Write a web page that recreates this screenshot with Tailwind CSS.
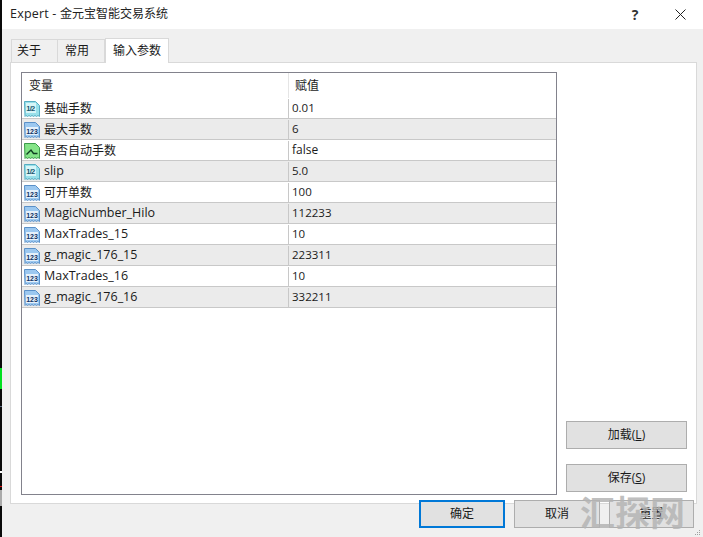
<!DOCTYPE html>
<html lang="zh-CN">
<head>
  <meta charset="UTF-8" />
  <title>Expert</title>
  <script src="https://cdn.jsdelivr.net/npm/@tailwindcss/browser@4"></script>
</head>
<body class="w-[703px] h-[537px] overflow-hidden bg-[#f0f0f0] text-[12px] text-[#1a1a1a] font-['Open_Sans','Noto_Sans_CJK_SC',sans-serif]">
  <svg width="0" height="0" class="absolute">
    <defs>
      <symbol id="ic-num" viewBox="0 0 16 16">
        <path d="M0.500 0.500h11l4 4v11l-1.500-1-1.500 1-1.500-1-1.500 1-1.500-1-1.500 1-1.500-1-1.500 1-1.500-1-1 1z" fill="#9cc8f0" stroke="#5a90c8"/>
        <rect x="2" y="5" width="12" height="8" fill="#e6f1fb"/>
        <text x="2.200" y="11.500" font-size="7" font-weight="700" font-family="Liberation Sans" fill="#0f3264">123</text>
      </symbol>
      <symbol id="ic-frac" viewBox="0 0 16 16">
        <path d="M0.500 0.500h11l4 4v11l-1.500-1-1.500 1-1.500-1-1.500 1-1.500-1-1.500 1-1.500-1-1.500 1-1.500-1-1 1z" fill="#98e0ea" stroke="#55acc2"/>
        <rect x="2" y="2" width="10" height="10" fill="#d8f5f8"/>
        <text x="2.200" y="10" font-size="7.500" font-weight="700" font-family="Liberation Sans" letter-spacing="-0.700" fill="#17566e">1/2</text>
      </symbol>
      <symbol id="ic-bool" viewBox="0 0 16 16">
        <path d="M0.500 0.500h11l4 4v11l-1.500-1-1.500 1-1.500-1-1.500 1-1.500-1-1.500 1-1.500-1-1.500 1-1.500-1-1 1z" fill="#84e488" stroke="#3b9a4a"/>
        <path d="M2.500 11.500l4.500-4.500 2.500 3.500h4" stroke="#0f3f22" stroke-width="1.400" fill="none"/>
      </symbol>
    </defs>
  </svg>

  <div class="relative flex h-[537px]">
    <!-- chart behind the dialog -->
    <div class="w-[2px] shrink-0 flex flex-col bg-[#0a0a0a]">
      <div class="h-[368px]"></div>
      <div class="h-[21px] bg-[#00e020]"></div>
      <div class="h-[17px]"></div>
      <div class="h-px bg-[#5a6a80]"></div>
      <div class="h-[64px]"></div>
      <div class="h-[2px] bg-white"></div>
      <div class="h-[13px]"></div>
      <div class="h-px bg-[#e01010]"></div>
      <div class="h-[3px]"></div>
      <div class="h-[16px] bg-[#aaaaaa]"></div>
    </div>

    <div class="flex-1 flex flex-col">
      <!-- title bar -->
      <div class="h-[29px] bg-white flex items-center pl-[8px]">
        <span class="flex-1 text-[#222]"><span class="text-[12.5px] tracking-[0.2px]">Expert - </span>金元宝智能交易系统</span>
        <span class="w-[12px] mr-[34px] text-center text-[14px] font-bold text-[#333]">?</span>
        <svg class="mr-[17px]" width="11" height="11" viewBox="0 0 11 11"><path d="M0.500 0.500L10.500 10.500M10.500 0.500L0.500 10.500" stroke="#222" fill="none"/></svg>
      </div>

      <!-- tabs -->
      <div class="flex items-end h-[33px] pl-[9px]">
        <div class="w-[47px] h-[23px] pl-[5px] border border-b-0 border-[#d9d9d9] flex items-center">关于</div>
        <div class="w-[47px] h-[23px] pl-[7px] border border-l-0 border-b-0 border-[#d9d9d9] flex items-center">常用</div>
        <div class="w-[64px] h-[25px] pl-[7px] -mb-px z-10 bg-white border border-b-0 border-[#d9d9d9] flex items-center">输入参数</div>
      </div>

      <!-- tab panel -->
      <div class="ml-[8px] mr-[6px] h-[442px] bg-white border border-[#d9d9d9] pt-[9px] pl-[10px] flex">
        <div class="w-[536px] h-[423px] border border-[#82828c] bg-white">
          <div class="flex h-[25px] items-center">
            <div class="w-[266px] pl-[7px]">变量</div>
            <div class="pl-[6px] border-l border-[#e5e5e5] h-full flex items-center">赋值</div>
          </div>
          <div class="flex h-[21px] pt-px items-center bg-white border-b border-[#c8c8c8]"><svg class="ml-[2px]" width="16" height="16"><use href="#ic-frac"/></svg><div class="w-[248px] pl-[4px]">基础手数</div><div class="pl-[3px] pb-[2px] text-[11.5px] border-l border-[#c8c8c8] h-full flex items-center">0.01</div></div>
          <div class="flex h-[21px] pt-px items-center bg-[#ebebeb] border-b border-[#c8c8c8]"><svg class="ml-[2px]" width="16" height="16"><use href="#ic-num"/></svg><div class="w-[248px] pl-[4px]">最大手数</div><div class="pl-[3px] pb-[2px] text-[11.5px] border-l border-[#c8c8c8] h-full flex items-center">6</div></div>
          <div class="flex h-[21px] pt-px items-center bg-white border-b border-[#c8c8c8]"><svg class="ml-[2px]" width="16" height="16"><use href="#ic-bool"/></svg><div class="w-[248px] pl-[4px]">是否自动手数</div><div class="pl-[3px] pb-[2px] text-[12px] border-l border-[#c8c8c8] h-full flex items-center">false</div></div>
          <div class="flex h-[21px] pt-px items-center bg-[#ebebeb] border-b border-[#c8c8c8]"><svg class="ml-[2px]" width="16" height="16"><use href="#ic-frac"/></svg><div class="w-[248px] pl-[4px] text-[12.5px]">slip</div><div class="pl-[3px] pb-[2px] text-[11.5px] border-l border-[#c8c8c8] h-full flex items-center">5.0</div></div>
          <div class="flex h-[21px] pt-px items-center bg-white border-b border-[#c8c8c8]"><svg class="ml-[2px]" width="16" height="16"><use href="#ic-num"/></svg><div class="w-[248px] pl-[4px]">可开单数</div><div class="pl-[3px] pb-[2px] text-[11.5px] border-l border-[#c8c8c8] h-full flex items-center">100</div></div>
          <div class="flex h-[21px] pt-px items-center bg-[#ebebeb] border-b border-[#c8c8c8]"><svg class="ml-[2px]" width="16" height="16"><use href="#ic-num"/></svg><div class="w-[248px] pl-[4px] text-[12.5px]">MagicNumber_Hilo</div><div class="pl-[3px] pb-[2px] text-[11.5px] border-l border-[#c8c8c8] h-full flex items-center">112233</div></div>
          <div class="flex h-[21px] pt-px items-center bg-white border-b border-[#c8c8c8]"><svg class="ml-[2px]" width="16" height="16"><use href="#ic-num"/></svg><div class="w-[248px] pl-[4px] text-[12.5px]">MaxTrades_15</div><div class="pl-[3px] pb-[2px] text-[11.5px] border-l border-[#c8c8c8] h-full flex items-center">10</div></div>
          <div class="flex h-[21px] pt-px items-center bg-[#ebebeb] border-b border-[#c8c8c8]"><svg class="ml-[2px]" width="16" height="16"><use href="#ic-num"/></svg><div class="w-[248px] pl-[4px] text-[12.5px]">g_magic_176_15</div><div class="pl-[3px] pb-[2px] text-[11.5px] border-l border-[#c8c8c8] h-full flex items-center">223311</div></div>
          <div class="flex h-[21px] pt-px items-center bg-white border-b border-[#c8c8c8]"><svg class="ml-[2px]" width="16" height="16"><use href="#ic-num"/></svg><div class="w-[248px] pl-[4px] text-[12.5px]">MaxTrades_16</div><div class="pl-[3px] pb-[2px] text-[11.5px] border-l border-[#c8c8c8] h-full flex items-center">10</div></div>
          <div class="flex h-[21px] pt-px items-center bg-[#ebebeb] border-b border-[#c8c8c8]"><svg class="ml-[2px]" width="16" height="16"><use href="#ic-num"/></svg><div class="w-[248px] pl-[4px] text-[12.5px]">g_magic_176_16</div><div class="pl-[3px] pb-[2px] text-[11.5px] border-l border-[#c8c8c8] h-full flex items-center">332211</div></div>
        </div>
        <div class="ml-[9px] w-[121px] flex flex-col justify-end gap-[15px] pb-[11px]">
          <div class="h-[28px] bg-[#e1e1e1] border border-[#adadad] flex items-center justify-center">加载(<span class="underline">L</span>)</div>
          <div class="h-[28px] bg-[#e1e1e1] border border-[#adadad] flex items-center justify-center">保存(<span class="underline">S</span>)</div>
        </div>
      </div>

      <!-- bottom buttons -->
      <div class="flex justify-end gap-[9px] pr-[9px] h-[33px] -mt-[4px] z-10">
        <div class="w-[86px] h-[28px] bg-[#e1e1e1] border-2 border-[#0078d7] flex items-center justify-center">确定</div>
        <div class="w-[86px] h-[28px] bg-[#e1e1e1] border border-[#adadad] flex items-center justify-center">取消</div>
        <div class="w-[85px] h-[28px] bg-[#e1e1e1] border border-[#adadad] flex items-center justify-center">重置</div>
      </div>
    </div>

    <!-- size grip -->
    <div class="absolute right-[3px] bottom-[2px] z-20 grid grid-cols-3 gap-px">
      <span></span><span></span><span class="w-px h-px bg-[#a0a0a0]"></span>
      <span></span><span class="w-px h-px bg-[#a0a0a0]"></span><span class="w-px h-px bg-[#a0a0a0]"></span>
      <span class="w-px h-px bg-[#a0a0a0]"></span><span class="w-px h-px bg-[#a0a0a0]"></span><span class="w-px h-px bg-[#a0a0a0]"></span>
    </div>

    <!-- watermark -->
    <div class="absolute left-[580px] top-[493px] z-20 text-[35px] leading-[40px] font-bold text-[#b4b4b4]/85 whitespace-nowrap">汇探网</div>
  </div>
</body>
</html>
